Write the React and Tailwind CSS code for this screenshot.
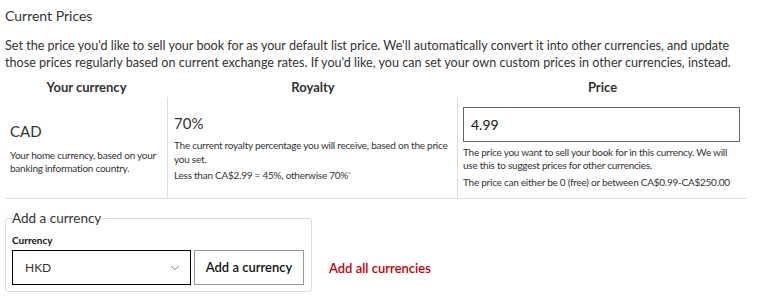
import { ChevronDown } from "lucide-react";

export default function App() {
  return (
    <div className="w-[774px] h-[306px] overflow-hidden bg-white text-[#333] px-[5px] pt-[7px] font-['Lato',sans-serif]">
      <h2 className="text-[14px] leading-[18px]">Current Prices</h2>
      <p className="mt-[12px] text-[12.6px] leading-[17px] w-[740px]">
        Set the price you'd like to sell your book for as your default list price. We'll automatically convert it into other currencies, and update those prices regularly based on current exchange rates. If you'd like, you can set your own custom prices in other currencies, instead.
      </p>

      {/* Prices table */}
      <div className="w-[742px] mt-[8px] border-b border-[#ddd]">
        <div className="grid grid-cols-[163px_290px_289px] text-[13px] font-bold leading-[16px] text-center">
          <div>Your currency</div>
          <div>Royalty</div>
          <div>Price</div>
        </div>
        <div className="grid grid-cols-[163px_290px_289px] mt-[2px] text-[10px] tracking-[-0.25px]">
          <div className="border-r border-[#ddd] pl-[5px] pr-[10px] pt-[24px]">
            <div className="text-[15px] leading-[20px] tracking-normal">CAD</div>
            <div className="leading-[13px] mt-[8px]">
              Your home currency, based on your banking information country.
            </div>
          </div>
          <div className="border-r border-[#ddd] pl-[6px] pr-[8px] pt-[16px]">
            <div className="text-[15px] leading-[20px] tracking-normal">70%</div>
            <div className="leading-[14px] mt-[5px]">
              The current royalty percentage you will receive, based on the price you set.
            </div>
            <div className="leading-[14px] mt-[2px]">
              Less than CA$2.99 = 45%, otherwise 70%<sup className="text-[6px]">*</sup>
            </div>
          </div>
          <div className="pl-[5px] pt-[10px] pb-[9px]">
            <div className="h-[35px] w-[277px] border border-[#666] flex items-center px-[7px] text-[14px] text-[#111] tracking-normal">
              4.99
            </div>
            <div className="leading-[13px] mt-[4px] pr-[10px]">
              The price you want to sell your book for in this currency. We will use this to suggest prices for other currencies.
            </div>
            <div className="leading-[13px] mt-[4px]">
              The price can either be 0 (free) or between CA$0.99-CA$250.00
            </div>
          </div>
        </div>
      </div>

      {/* Add a currency */}
      <div className="flex items-end mt-[11px]">
        <fieldset className="w-[306px] border border-[#ddd] rounded-[3px] pl-[6px] pr-[7px] pb-[6px]">
          <legend className="text-[13.5px] leading-[17px] px-0">Add a currency</legend>
          <div className="text-[10px] font-bold leading-[13px] mt-[7px] text-[#111]">Currency</div>
          <div className="flex gap-[3px] mt-[3px]">
            <div className="w-[179px] h-[35px] border border-black flex items-center justify-between pl-[12px] pr-[8px] text-[12px]">
              <span>HKD</span>
              <ChevronDown size={14} strokeWidth={1.25} className="text-[#444]" />
            </div>
            <button className="w-[110px] h-[35px] border border-[#999] text-[13px] font-semibold text-[#111]">
              Add a currency
            </button>
          </div>
        </fieldset>
        <div className="ml-[17px] mb-[14px] text-[13px] font-semibold text-[#c40000]">Add all currencies</div>
      </div>
    </div>
  );
}
